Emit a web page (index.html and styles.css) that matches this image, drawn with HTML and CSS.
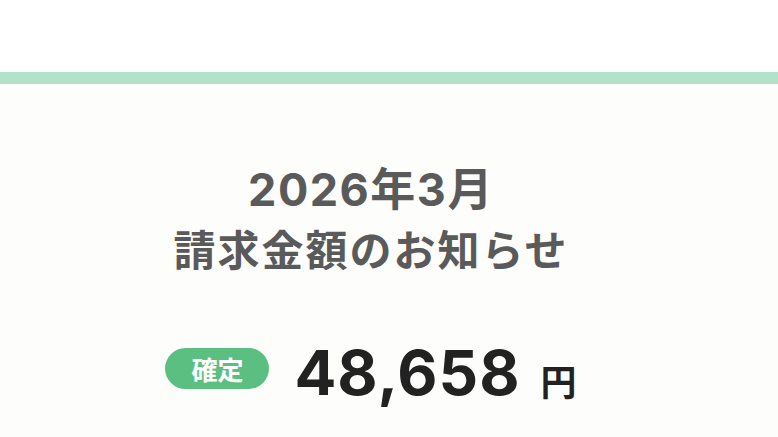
FILE: index.html
```html
<!DOCTYPE html>
<html lang="ja">
<head>
<meta charset="utf-8">
<link rel="stylesheet" href="styles.css">
</head>
<body>
<header class="top"></header>
<div class="bar"></div>
<main class="main">
  <h1 class="title">
    <span class="title-month">2026年3月</span>
    <span class="title-sub">請求金額のお知らせ</span>
  </h1>
  <div class="amount-row">
    <span class="badge">確定</span>
    <span class="amount">48,658</span>
    <span class="yen">円</span>
  </div>
</main>
</body>
</html>
```
FILE: styles.css
```css
html, body {
  margin: 0;
  padding: 0;
}
body {
  width: 778px;
  height: 437px;
  overflow: hidden;
  background: #fdfdfb;
  font-family: Inter, "Noto Sans CJK JP", sans-serif;
}
.top {
  height: 72px;
  background: #ffffff;
}
.bar {
  height: 12px;
  background: #b2e3ca;
}
.main {
  display: flex;
  flex-direction: column;
  align-items: center;
  padding-top: 78px;
  padding-right: 36px;
}
.title {
  margin: 0;
  display: flex;
  flex-direction: column;
  align-items: center;
  color: #5a5a5a;
  font-weight: 700;
}
.title-month {
  font-size: 45px;
  line-height: 56px;
  letter-spacing: 1.5px;
}
.title-sub {
  font-family: "Noto Sans CJK JP", sans-serif;
  font-size: 42px;
  line-height: 60px;
  letter-spacing: 2px;
}
.amount-row {
  display: flex;
  align-items: center;
  margin-top: 60px;
}
.badge {
  display: inline-block;
  background: #5cbf82;
  color: #ffffff;
  font-family: "Noto Sans CJK JP", sans-serif;
  font-weight: 700;
  font-size: 26px;
  line-height: 41px;
  padding: 0 26px;
  margin-bottom: 10px;
  border-radius: 21px;
}
.amount {
  margin-left: 25px;
  color: #222222;
  font-weight: 700;
  font-size: 62px;
  line-height: 70px;
  letter-spacing: 1px;
}
.yen {
  margin-left: 20px;
  margin-top: 14px;
  color: #222222;
  font-family: "Noto Sans CJK JP", sans-serif;
  font-weight: 700;
  font-size: 36px;
}
```
